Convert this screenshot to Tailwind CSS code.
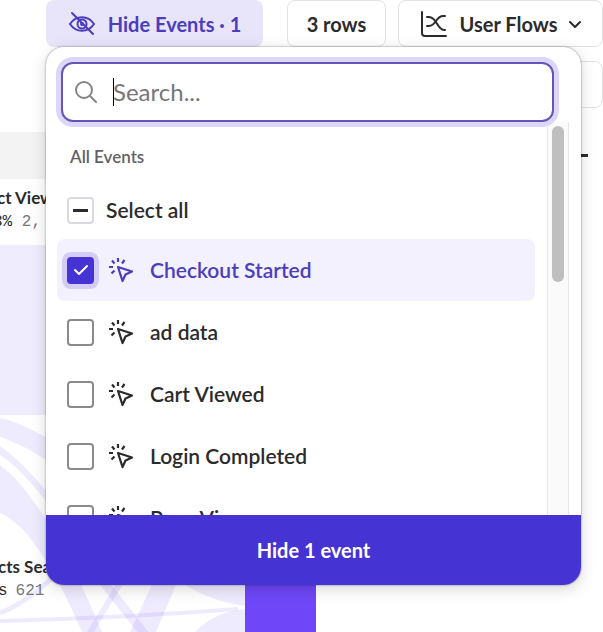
<!DOCTYPE html>
<html lang="en">
  <head>
    <meta charset="UTF-8" />
    <meta name="viewport" content="width=device-width, initial-scale=1.0" />
    <title>User Flows</title>
    <script src="https://cdn.jsdelivr.net/npm/@tailwindcss/browser@4"></script>
  </head>
  <body class="bg-white font-['Lato',sans-serif] text-[#2b2b2d]">
    <!-- shared icons -->
    <svg class="hidden">
      <symbol id="event" viewBox="0 0 26 26" fill="none" stroke="currentColor" stroke-width="2.2">
        <path d="M10 10 24 14.500 17.500 17.500 14.500 24Z" stroke-linejoin="round" />
        <path d="M10 1v4M4 3.500l2.500 3M16.500 3l-2.500 3.500M1 10h4M6.500 13.500 3.500 16.500" />
      </symbol>
    </svg>

    <div class="relative min-h-screen overflow-hidden">
      <!-- toolbar -->
      <header class="flex justify-end gap-3 pl-[46px]">
        <button class="mr-3 flex h-[47px] flex-1 items-center justify-center gap-3 rounded-lg bg-[#e8e5fb] text-xl font-bold whitespace-nowrap text-[#4c3dbd]">
          <svg class="h-7 w-7" viewBox="0 0 28 28" fill="none" stroke="currentColor" stroke-width="2" stroke-linecap="round">
            <path d="M2 14C8 5 20 5 26 14C20 23 8 23 2 14Z" />
            <circle cx="14" cy="14" r="4.500" />
            <circle cx="14" cy="14" r="1" />
            <path d="M4 3 25 24" />
          </svg>
          Hide Events · 1
        </button>
        <button class="h-[47px] w-[99px] rounded-lg border border-[#e2e2e4] text-xl font-bold">3 rows</button>
        <button class="flex h-[47px] w-[205px] items-center justify-center gap-3 rounded-lg border border-[#e2e2e4] text-xl font-bold whitespace-nowrap">
          <svg class="h-7 w-7" viewBox="0 0 28 28" fill="none" stroke="currentColor" stroke-width="2" stroke-linecap="round">
            <path d="M2 2v21q0 3 3 3h21" />
            <path d="M7 7h2c8 0 8 13 15 13h1M7 16h2c7 0 7-10 14-10h2" />
          </svg>
          <span>User Flows</span>
          <svg class="h-3 w-3" viewBox="0 0 12 12" fill="none" stroke="currentColor" stroke-width="2" stroke-linecap="round" stroke-linejoin="round">
            <path d="M1 4l5 5 5-5" />
          </svg>
        </button>
      </header>

      <!-- flow chart -->
      <main>
        <div class="flex justify-end pt-[14px]">
          <button class="h-[47px] w-[99px] rounded-lg border border-[#e2e2e4]" aria-label="Options"></button>
        </div>
        <div class="mt-6 mr-[68px] h-[47px] bg-[#f3f3f4]"></div>
        <div class="relative h-[453px]">
          <svg class="absolute top-0 left-0 h-[453px] w-[603px]" viewBox="0 179 603 453" fill="none">
            <path d="M0 245H120V415H0Z" fill="#efecfd" />
            <g fill="#6f47f8" fill-opacity="0.11">
              <path d="M0 418Q24 423 60 446V470Q28 446 0 437Z" />
              <path d="M0 446Q24 462 60 508V520Q24 470 0 455Z" />
              <path d="M0 465C34 490 70 555 102 632H82C60 580 30 525 0 513Z" />
              <path d="M154 580H178L156 632H130Z" />
              <path d="M182 583Q212 602 245 606V609Q214 612 195 632H245V583Z" />
            </g>
            <g stroke="#6f47f8" stroke-opacity="0.11">
              <path d="M0 613Q26 603 54 576" stroke-width="5" />
              <path d="M0 621Q120 618 238 609" stroke-width="4" />
              <path d="M122 580 88 636" stroke-width="6" />
              <path d="M102 580 146 636" stroke-width="9" />
            </g>
            <path d="M245 520H316V632H245Z" fill="#6f47f8" />
          </svg>
          <div class="absolute top-[7px] left-[-3px] leading-6">
            <div class="text-[17px] font-bold">ct View</div>
            <div class="font-['Liberation_Mono',monospace] text-base"><span class="-ml-1">3%</span> <span class="text-[#77777c]">2,</span></div>
          </div>
          <div class="absolute top-[376px] left-[-2px] leading-6">
            <div class="text-[17px] font-bold">cts Sea</div>
            <div class="font-['Liberation_Mono',monospace] text-base">s<span class="ml-2 text-[#77777c]">621</span></div>
          </div>
        </div>
      </main>
      <div class="absolute top-[154px] right-[15px] h-[3px] w-3 bg-[#2b2b2d]"></div>

      <!-- hide events menu -->
      <form class="absolute top-[47px] right-[22px] left-[46px] flex flex-col overflow-hidden rounded-[18px] bg-white shadow-[0_0_2px_rgba(0,0,0,0.5),0_4px_16px_rgba(0,0,0,0.16)]">
        <label class="relative z-10 mt-[15px] mr-[27px] ml-[15px] flex h-[60px] items-center gap-[15px] rounded-xl border-2 border-[#6555b5] bg-white pl-[11px] ring-[5px] ring-[#dcd7fa]">
          <svg class="h-6 w-6 shrink-0 text-[#858588]" viewBox="0 0 24 24" fill="none" stroke="currentColor" stroke-width="2" stroke-linecap="round">
            <circle cx="10" cy="10" r="8" />
            <path d="M16 16l6 6" />
          </svg>
          <span class="flex flex-1 items-center">
            <span class="-mr-px h-7 w-px bg-black"></span>
            <input type="text" aria-label="Search events" placeholder="Search..." class="w-full text-2xl outline-none placeholder:text-[#77777a]" />
          </span>
        </label>

        <div class="flex h-[393px] overflow-hidden">
          <div class="flex-1 pr-3 pl-[11px]">
            <h2 class="mt-[23px] ml-[13px] text-[17px] leading-6 font-semibold text-[#626266]">All Events</h2>
            <label class="flex h-[70px] items-center gap-3 pt-3 pl-[10px] text-[21px] font-semibold">
              <span class="grid place-items-center">
                <input type="checkbox" class="col-start-1 row-start-1 h-[27px] w-[27px] appearance-none rounded border-2 border-[#dad9e2]" />
                <span class="col-start-1 row-start-1 h-[3px] w-[15px] bg-[#2b2b2d]"></span>
              </span>
              Select all
            </label>

            <label class="flex h-[62px] items-center rounded-lg bg-[#f3f1fd] pl-[10px] text-[21px] font-semibold text-[#4c3dbd]">
              <span class="grid place-items-center text-white">
                <input type="checkbox" checked class="col-start-1 row-start-1 h-[27px] w-[27px] appearance-none rounded bg-[#4534d3] ring-[5px] ring-[#d2ccf7]" />
                <svg class="pointer-events-none col-start-1 row-start-1 h-4 w-4" viewBox="0 0 16 16" fill="none" stroke="currentColor" stroke-width="2" stroke-linecap="round" stroke-linejoin="round"><path d="M2 8l4 4 8-8" /></svg>
              </span>
              <svg class="mr-4 ml-[14px] h-[26px] w-[26px]"><use href="#event" /></svg>
              Checkout Started
            </label>
            <label class="flex h-[62px] items-center pl-[10px] text-[21px] font-semibold">
              <input type="checkbox" class="h-[27px] w-[27px] appearance-none rounded border-2 border-[#8a8a8d]" />
              <svg class="mr-4 ml-[14px] h-[26px] w-[26px]"><use href="#event" /></svg>
              ad data
            </label>
            <label class="flex h-[62px] items-center pl-[10px] text-[21px] font-semibold">
              <input type="checkbox" class="h-[27px] w-[27px] appearance-none rounded border-2 border-[#8a8a8d]" />
              <svg class="mr-4 ml-[14px] h-[26px] w-[26px]"><use href="#event" /></svg>
              Cart Viewed
            </label>
            <label class="flex h-[62px] items-center pl-[10px] text-[21px] font-semibold">
              <input type="checkbox" class="h-[27px] w-[27px] appearance-none rounded border-2 border-[#8a8a8d]" />
              <svg class="mr-4 ml-[14px] h-[26px] w-[26px]"><use href="#event" /></svg>
              Login Completed
            </label>
            <label class="flex h-[62px] items-center pl-[10px] text-[21px] font-semibold">
              <input type="checkbox" class="h-[27px] w-[27px] appearance-none rounded border-2 border-[#8a8a8d]" />
              <svg class="mr-4 ml-[14px] h-[26px] w-[26px]"><use href="#event" /></svg>
              Page View
            </label>
          </div>
          <!-- scrollbar -->
          <div class="mr-3 w-[22px] border-x border-[#e6e6e6] bg-[#fafafa] px-1 pt-1">
            <div class="h-[156px] rounded-full bg-[#bfbfbf]"></div>
          </div>
        </div>

        <button type="button" class="h-[70px] bg-[#4534d3] text-xl font-bold text-white">Hide 1 event</button>
      </form>
    </div>
  </body>
</html>
